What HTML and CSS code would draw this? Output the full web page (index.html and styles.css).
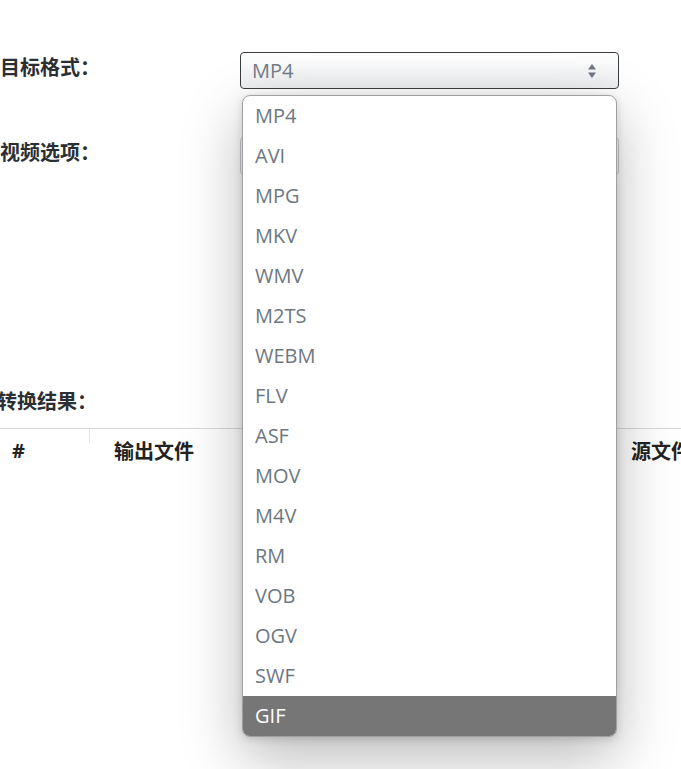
FILE: index.html
```html
<!DOCTYPE html>
<html lang="zh">
<head>
<meta charset="utf-8">
<link rel="stylesheet" href="styles.css">
</head>
<body>
<div class="page">
  <div class="row row-format">
    <div class="label">目标格式：</div>
    <div class="field">
      <div class="select">
        <span class="select-value">MP4</span>
        <svg class="arrows" width="10" height="18" viewBox="0 0 10 18"><path d="M5 2 L9 7.5 H1 Z" fill="#6f7984"/><path d="M5 16 L9 10.5 H1 Z" fill="#6f7984"/></svg>
      </div>
      <ul class="dropdown">
        <li>MP4</li>
        <li>AVI</li>
        <li>MPG</li>
        <li>MKV</li>
        <li>WMV</li>
        <li>M2TS</li>
        <li>WEBM</li>
        <li>FLV</li>
        <li>ASF</li>
        <li>MOV</li>
        <li>M4V</li>
        <li>RM</li>
        <li>VOB</li>
        <li>OGV</li>
        <li>SWF</li>
        <li class="active">GIF</li>
      </ul>
    </div>
  </div>
  <div class="row row-video">
    <div class="label">视频选项：</div>
    <div class="field">
      <div class="select select-light"></div>
    </div>
  </div>
  <div class="result-title">转换结果：</div>
  <div class="table">
    <div class="th th-num">#</div>
    <div class="th th-out">输出文件</div>
    <div class="th th-src">源文件</div>
  </div>
</div>
</body>
</html>
```
FILE: styles.css
```css
html, body {
  margin: 0;
  padding: 0;
  background: #ffffff;
  overflow: hidden;
}
body {
  width: 681px;
  height: 769px;
  font-family: "Open Sans", "Noto Sans CJK SC", sans-serif;
  color: #333;
}
.page {
  padding-top: 52px;
}
.row {
  display: flex;
  align-items: flex-start;
}
.label {
  width: 240px;
  font-size: 20px;
  font-weight: 700;
  color: #2b2f33;
  line-height: 30px;
  margin-top: 0;
  font-family: "Noto Sans CJK SC", sans-serif;
}
.field {
  position: relative;
  width: 379px;
}
.select {
  box-sizing: border-box;
  height: 37px;
  border: 1px solid #3a3d40;
  border-radius: 4px;
  background: linear-gradient(#ffffff, #eceeef);
  display: flex;
  align-items: center;
  justify-content: space-between;
  padding: 0 21px 0 11px;
}
.select-value {
  font-size: 20px;
  color: #737c86;
}
.arrows {
  display: block;
}
.row-video {
  margin-top: 48px;
}
.select-light {
  border-color: #c9ced3;
  background: #fff;
  height: 38px;
}
.dropdown {
  position: absolute;
  left: 2px;
  top: 43px;
  width: 375px;
  margin: 0;
  padding: 0;
  list-style: none;
  background: #fff;
  border: 1px solid #a0a0a0;
  border-radius: 8px;
  overflow: hidden;
  box-sizing: border-box;
  z-index: 10;
  box-shadow: 0 20px 60px rgba(0, 0, 0, 0.28), 0 2px 8px rgba(0, 0, 0, 0.15);
}
.dropdown li {
  height: 40px;
  line-height: 40px;
  padding-left: 12px;
  font-size: 20px;
  color: #6d7781;
}
.dropdown li.active {
  background: #767676;
  color: #ffffff;
}
.result-title {
  margin-top: 211px;
  margin-left: -3px;
  font-size: 20px;
  font-weight: 700;
  color: #2b2f33;
  line-height: 30px;
  font-family: "Noto Sans CJK SC", sans-serif;
}
.table {
  margin-top: 12px;
  border-top: 1px solid #d6d9dc;
  display: grid;
  grid-template-columns: 90px 1fr 80px;
  height: 50px;
}
.th {
  font-size: 20px;
  font-weight: 700;
  color: #222;
  font-family: "Noto Sans CJK SC", sans-serif;
  padding-top: 7px;
  line-height: 30px;
}
.th-num {
  padding-left: 12px;
  font-family: "Open Sans", sans-serif;
  border-right: 1px solid #e2e4e6;
  height: 14px;
  padding-top: 0;
  line-height: 44px;
  overflow: visible;
}
.th-out {
  padding-left: 24px;
}
.th-src {
  padding-left: 30px;
  white-space: nowrap;
}
```
